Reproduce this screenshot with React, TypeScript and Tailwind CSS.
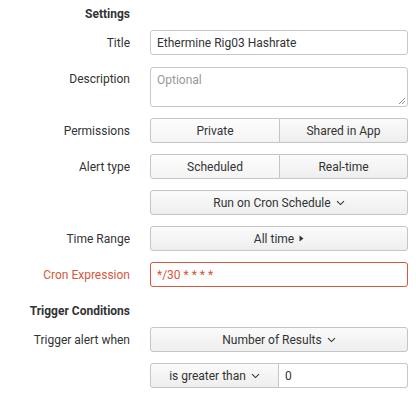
import React from "react"

const font = { fontFamily: "Roboto, 'Liberation Sans', sans-serif" }

function Chevron() {
  return (
    <svg width="9" height="6" viewBox="0 0 9 6" className="ml-[5px] inline-block">
      <path d="M1 1.2 L4.5 4.6 L8 1.2" fill="none" stroke="#333" strokeWidth="1.1" />
    </svg>
  )
}

function Caret() {
  return (
    <svg width="5" height="7" viewBox="0 0 5 7" className="ml-[5px] inline-block">
      <path d="M0.5 0.5 L4.5 3.5 L0.5 6.5 Z" fill="#333" />
    </svg>
  )
}

const btn =
  "h-[25px] flex items-center justify-center border border-[#c5c5c5] bg-gradient-to-b from-[#fbfbfb] to-[#eeeeee] text-[#333]"

function Row({ label, red, children }: { label: string; red?: boolean; children: React.ReactNode }) {
  return (
    <div className="flex items-center">
      <div className={`w-[130px] text-right ${red ? "text-[#d4583c]" : "text-[#333]"}`}>{label}</div>
      <div className="ml-[20px] w-[258px]">{children}</div>
    </div>
  )
}

export default function App() {
  return (
    <div className="w-[416px] h-[395px] bg-white text-[12px] leading-[16px] pt-[6px]" style={font}>
      <div className="w-[130px] text-right font-bold text-[#333]">Settings</div>

      <div className="mt-[8px] flex flex-col gap-[11px]">
        <div className="mb-[1px]">
          <Row label="Title">
            <div className="h-[25px] flex items-center px-[6px] border border-[#c8c8c8] rounded-[3px] text-[#333]">
              Ethermine Rig03 Hashrate
            </div>
          </Row>
        </div>

        <div className="flex">
          <div className="w-[130px] text-right text-[#333] pt-[4px]">Description</div>
          <div className="ml-[20px] w-[258px] h-[40px] border border-[#c8c8c8] rounded-[3px] px-[6px] pt-[4px] text-[#999] relative">
            Optional
            <svg width="8" height="8" viewBox="0 0 8 8" className="absolute right-[1px] bottom-[1px]">
              <path d="M7 1 L1 7 M7 4 L4 7" stroke="#777" strokeWidth="0.8" />
            </svg>
          </div>
        </div>

        <Row label="Permissions">
          <div className="flex">
            <div className={`${btn} w-[130px] rounded-l-[3px] from-[#fdfdfd] to-[#f4f4f4]`}>Private</div>
            <div className={`${btn} flex-1 border-l-0 rounded-r-[3px]`}>Shared in App</div>
          </div>
        </Row>

        <Row label="Alert type">
          <div className="flex">
            <div className={`${btn} w-[130px] rounded-l-[3px] from-[#fdfdfd] to-[#f4f4f4]`}>Scheduled</div>
            <div className={`${btn} flex-1 border-l-0 rounded-r-[3px]`}>Real-time</div>
          </div>
        </Row>

        <Row label="">
          <div className={`${btn} rounded-[3px]`}>
            Run on Cron Schedule
            <Chevron />
          </div>
        </Row>

        <Row label="Time Range">
          <div className={`${btn} rounded-[3px]`}>
            All time
            <Caret />
          </div>
        </Row>

        <Row label="Cron Expression" red>
          <div className="h-[25px] flex items-center px-[6px] border border-[#d4583c] rounded-[3px] text-[#d4583c]">
            */30 * * * *
          </div>
        </Row>
      </div>

      <div className="mt-[16px] w-[130px] text-right font-bold text-[#333]">Trigger Conditions</div>

      <div className="mt-[8px] flex flex-col gap-[11px]">
        <Row label="Trigger alert when">
          <div className={`${btn} rounded-[3px]`}>
            Number of Results
            <Chevron />
          </div>
        </Row>

        <Row label="">
          <div className="flex">
            <div className={`${btn} w-[129px] rounded-l-[3px]`}>
              is greater than
              <Chevron />
            </div>
            <div className="h-[25px] flex-1 flex items-center px-[6px] border border-l-0 border-[#c8c8c8] rounded-r-[3px] text-[#333]">
              0
            </div>
          </div>
        </Row>
      </div>
    </div>
  )
}
